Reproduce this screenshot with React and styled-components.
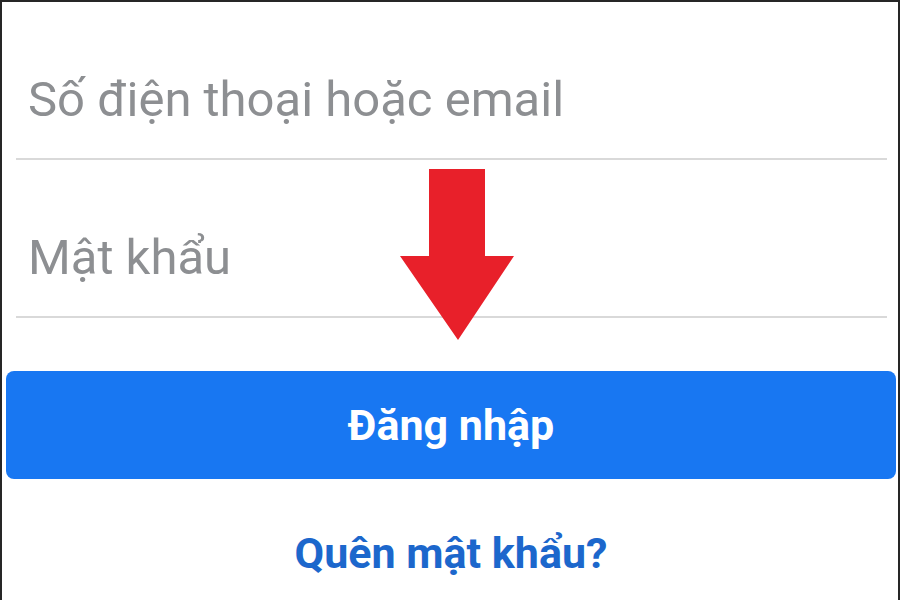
import React from 'react';
import styled, { createGlobalStyle } from 'styled-components';

const GlobalStyle = createGlobalStyle`
    html, body {
        margin: 0;
        padding: 0;
        background: #ffffff;
    }
    body {
        font-family: Roboto, "Noto Sans", Arial, sans-serif;
    }
`;

const Frame = styled.div`
    position: relative;
    box-sizing: border-box;
    width: 900px;
    height: 600px;
    overflow: hidden;
    border: 2px solid #262626;
    border-bottom: 0;
    background: #ffffff;
    display: flex;
    flex-direction: column;
    padding: 0 2px 0 4px;
`;

const Field = styled.div`
    box-sizing: border-box;
    height: ${(p) => p.height}px;
    margin: 0 9px 0 10px;
    padding: 0 0 ${(p) => p.bottom}px 12px;
    border-bottom: 2px solid #d9d9d9;
    display: flex;
    align-items: flex-end;
    font-size: 49px;
    line-height: 1;
    color: #8d8f92;
`;

const LoginButton = styled.button`
    margin-top: 53px;
    height: 108px;
    width: 100%;
    border: 0;
    border-radius: 8px;
    background: #1877f2;
    color: #ffffff;
    font-family: Roboto, "Noto Sans", Arial, sans-serif;
    font-weight: 700;
    font-size: 43px;
    padding: 0;
    cursor: pointer;
`;

const ForgotLink = styled.a`
    margin-top: 53px;
    align-self: center;
    color: #1c67cc;
    font-weight: 700;
    font-size: 43px;
    line-height: 1;
    text-decoration: none;
`;

const Arrow = styled.svg`
    position: absolute;
    left: 398px;
    top: 167px;
    width: 114px;
    height: 171px;
`;

const App = () => {
    return (
        <>
            <GlobalStyle />
            <Frame>
                <Field height={158} bottom={34}>Số điện thoại hoặc email</Field>
                <Field height={158} bottom={34}>Mật khẩu</Field>
                <LoginButton type="button">Đăng nhập</LoginButton>
                <ForgotLink href="#">Quên mật khẩu?</ForgotLink>
                <Arrow viewBox="0 0 114 171">
                    <polygon points="29,0 85,0 85,87 114,87 58,171 0,87 29,87" fill="#e8202a" />
                </Arrow>
            </Frame>
        </>
    );
};

export default App;
